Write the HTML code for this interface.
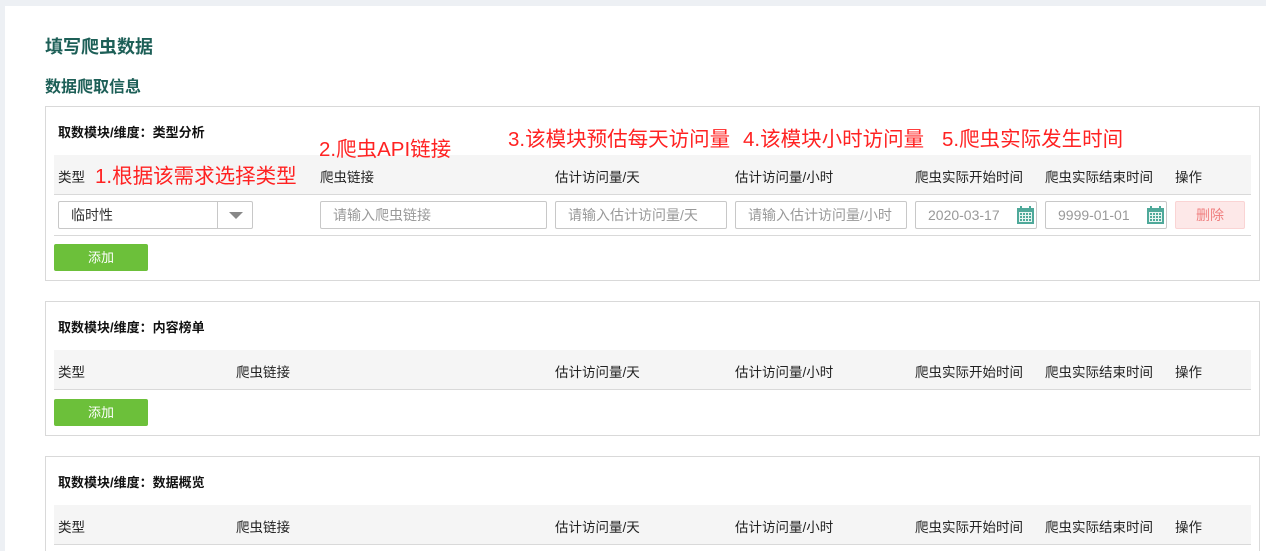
<!DOCTYPE html><html><head><meta charset="utf-8"><style>
*{box-sizing:border-box;margin:0;padding:0}
html{width:1266px;height:551px;overflow:hidden}
body{width:1266px;height:551px;overflow:hidden;background:#edf0f4;font-family:"Liberation Sans","Noto Sans CJK SC",sans-serif;font-size:13px;color:#222;position:relative}
.page{position:absolute;left:5px;top:6px;width:1261px;height:545px;background:#fff}
.a{position:absolute;white-space:nowrap}
.t1{left:45px;top:33px;font-size:18px;font-weight:bold;color:#1d5f57}
.t2{left:45px;top:73px;font-size:16px;font-weight:bold;color:#1d5f57}
.box{position:absolute;left:45px;width:1215px;border:1px solid #d9d9d9;background:#fff}
.hd{position:absolute;left:54px;width:1197px;height:40px;background:#f5f5f5;border-bottom:1px solid #d9d9d9}
.mt{font-weight:bold;font-size:13px;color:#111}
.h{font-size:13.5px;color:#222}
.btn{position:absolute;left:54px;width:94px;height:27px;background:#6cc03a;color:#fff;font-size:13px;text-align:center;line-height:27px;border-radius:2px}
.in{position:absolute;top:201px;height:28px;border:1px solid #c8c8c8;border-radius:2px;color:#999;font-size:14px;line-height:26px;padding-left:12px;overflow:hidden;white-space:nowrap}
.red{color:#ff2222;font-size:20.5px}
.cal{position:absolute;right:2px;top:4px;width:17px;height:18px}
</style></head><body><div class="page"></div>
<div class="a t1">填写爬虫数据</div>
<div class="a t2">数据爬取信息</div>

<div class="box" style="top:106px;height:175px"></div>
<div class="a mt" style="left:58px;top:122px">取数模块/维度：类型分析</div>
<div class="hd" style="top:155px"></div>
<div class="a h" style="left:58px;top:166px">类型</div>
<div class="a h" style="left:320px;top:166px">爬虫链接</div>
<div class="a h" style="left:555px;top:166px">估计访问量/天</div>
<div class="a h" style="left:735px;top:166px">估计访问量/小时</div>
<div class="a h" style="left:915px;top:166px">爬虫实际开始时间</div>
<div class="a h" style="left:1045px;top:166px">爬虫实际结束时间</div>
<div class="a h" style="left:1175px;top:166px">操作</div>
<div class="a red" style="left:95px;top:159px">1.根据该需求选择类型</div>
<div class="a red" style="left:319px;top:132px">2.爬虫API链接</div>
<div class="a red" style="left:508px;top:122px">3.该模块预估每天访问量</div>
<div class="a red" style="left:743px;top:122px">4.该模块小时访问量</div>
<div class="a red" style="left:942px;top:122px">5.爬虫实际发生时间</div>
<div class="in" style="left:58px;width:195px;color:#333">临时性<div style="position:absolute;left:158px;top:0;width:1px;height:26px;background:#c8c8c8"></div><div style="position:absolute;left:170px;top:10px;border-left:7px solid transparent;border-right:7px solid transparent;border-top:7px solid #888"></div></div>
<div class="in" style="left:320px;width:227px">请输入爬虫链接</div>
<div class="in" style="left:555px;width:172px">请输入估计访问量/天</div>
<div class="in" style="left:735px;width:172px">请输入估计访问量/小时</div>
<div class="in" style="left:915px;width:122px">2020-03-17<svg class="cal" viewBox="0 0 17 18"><rect x="0" y="2" width="17" height="16" fill="#4fa99a"/><rect x="2" y="6" width="13" height="10" fill="#e8f5f2"/><g fill="#4fa99a"><rect x="3" y="7" width="2" height="2"/><rect x="6" y="7" width="2" height="2"/><rect x="9" y="7" width="2" height="2"/><rect x="12" y="7" width="2" height="2"/><rect x="3" y="10" width="2" height="2"/><rect x="6" y="10" width="2" height="2"/><rect x="9" y="10" width="2" height="2"/><rect x="12" y="10" width="2" height="2"/><rect x="3" y="13" width="2" height="2"/><rect x="6" y="13" width="2" height="2"/><rect x="9" y="13" width="2" height="2"/><rect x="12" y="13" width="2" height="2"/></g><rect x="3" y="0" width="2" height="4" fill="#4fa99a"/><rect x="12" y="0" width="2" height="4" fill="#4fa99a"/></svg></div>
<div class="in" style="left:1045px;width:122px">9999-01-01<svg class="cal" viewBox="0 0 17 18"><rect x="0" y="2" width="17" height="16" fill="#4fa99a"/><rect x="2" y="6" width="13" height="10" fill="#e8f5f2"/><g fill="#4fa99a"><rect x="3" y="7" width="2" height="2"/><rect x="6" y="7" width="2" height="2"/><rect x="9" y="7" width="2" height="2"/><rect x="12" y="7" width="2" height="2"/><rect x="3" y="10" width="2" height="2"/><rect x="6" y="10" width="2" height="2"/><rect x="9" y="10" width="2" height="2"/><rect x="12" y="10" width="2" height="2"/><rect x="3" y="13" width="2" height="2"/><rect x="6" y="13" width="2" height="2"/><rect x="9" y="13" width="2" height="2"/><rect x="12" y="13" width="2" height="2"/></g><rect x="3" y="0" width="2" height="4" fill="#4fa99a"/><rect x="12" y="0" width="2" height="4" fill="#4fa99a"/></svg></div>
<div class="in" style="left:1175px;width:70px;background:#fde8e8;border-color:#fad4d4;color:#f08080;padding:0;text-align:center">删除</div>
<div class="a" style="left:54px;top:235px;width:1197px;height:1px;background:#d9d9d9"></div>
<div class="btn" style="top:244px">添加</div>

<div class="box" style="top:301px;height:135px"></div>
<div class="a mt" style="left:58px;top:317px">取数模块/维度：内容榜单</div>
<div class="hd" style="top:350px"></div>
<div class="a h" style="left:58px;top:361px">类型</div>
<div class="a h" style="left:236px;top:361px">爬虫链接</div>
<div class="a h" style="left:555px;top:361px">估计访问量/天</div>
<div class="a h" style="left:735px;top:361px">估计访问量/小时</div>
<div class="a h" style="left:915px;top:361px">爬虫实际开始时间</div>
<div class="a h" style="left:1045px;top:361px">爬虫实际结束时间</div>
<div class="a h" style="left:1175px;top:361px">操作</div>
<div class="btn" style="top:399px">添加</div>

<div class="box" style="top:456px;height:100px"></div>
<div class="a mt" style="left:58px;top:472px">取数模块/维度：数据概览</div>
<div class="hd" style="top:505px"></div>
<div class="a h" style="left:58px;top:516px">类型</div>
<div class="a h" style="left:236px;top:516px">爬虫链接</div>
<div class="a h" style="left:555px;top:516px">估计访问量/天</div>
<div class="a h" style="left:735px;top:516px">估计访问量/小时</div>
<div class="a h" style="left:915px;top:516px">爬虫实际开始时间</div>
<div class="a h" style="left:1045px;top:516px">爬虫实际结束时间</div>
<div class="a h" style="left:1175px;top:516px">操作</div>
</body></html>
